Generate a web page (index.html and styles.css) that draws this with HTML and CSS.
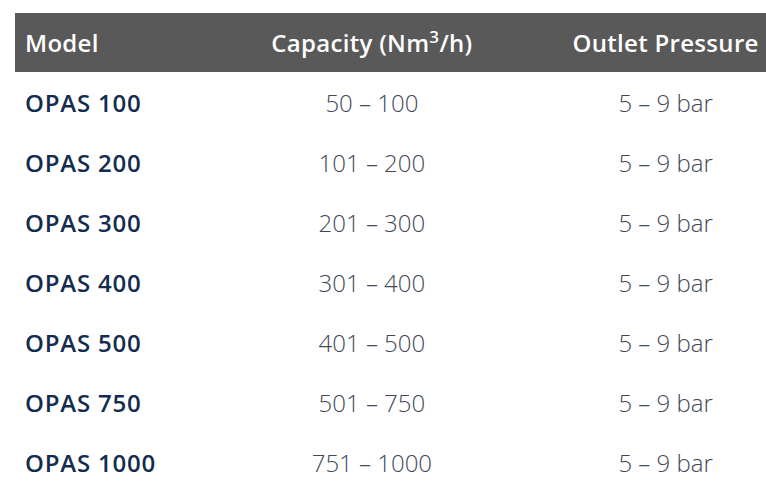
FILE: index.html
```html
<!DOCTYPE html>
<html>
<head>
<meta charset="utf-8">
<link rel="stylesheet" href="styles.css">
</head>
<body>
<table class="spec">
  <colgroup>
    <col class="c-model">
    <col class="c-cap">
    <col class="c-press">
  </colgroup>
  <thead>
    <tr>
      <th class="left">Model</th>
      <th>Capacity (Nm<sup>3</sup>/h)</th>
      <th>Outlet Pressure</th>
    </tr>
  </thead>
  <tbody>
    <tr><td class="model">OPAS 100</td><td>50 – 100</td><td>5 – 9 bar</td></tr>
    <tr><td class="model">OPAS 200</td><td>101 – 200</td><td>5 – 9 bar</td></tr>
    <tr><td class="model">OPAS 300</td><td>201 – 300</td><td>5 – 9 bar</td></tr>
    <tr><td class="model">OPAS 400</td><td>301 – 400</td><td>5 – 9 bar</td></tr>
    <tr><td class="model">OPAS 500</td><td>401 – 500</td><td>5 – 9 bar</td></tr>
    <tr><td class="model">OPAS 750</td><td>501 – 750</td><td>5 – 9 bar</td></tr>
    <tr><td class="model">OPAS 1000</td><td>751 – 1000</td><td>5 – 9 bar</td></tr>
  </tbody>
</table>
</body>
</html>
```
FILE: styles.css
```css
html, body {
  margin: 0;
  padding: 0;
  background: #ffffff;
  overflow: hidden;
}
body {
  padding: 13px 0 0 15px;
  font-family: "Open Sans", "Liberation Sans", sans-serif;
}
.spec {
  border-collapse: collapse;
  table-layout: fixed;
  width: 803px;
}
.c-model { width: 215px; }
.c-cap { width: 282px; }
.c-press { width: 304px; }
.spec th {
  background: #595959;
  color: #ffffff;
  font-weight: 600;
  font-size: 24px;
  letter-spacing: 0.3px;
  height: 59px;
  padding: 0 10px;
  text-align: center;
  white-space: nowrap;
}
.spec th.left { text-align: left; }
.spec th sup {
  font-size: 17px;
  line-height: 0;
  vertical-align: 9px;
}
.spec td {
  height: 60px;
  padding: 0 10px;
  font-size: 24px;
  font-weight: 300;
  color: #3f4959;
  text-align: center;
  white-space: nowrap;
}
.spec td.model {
  text-align: left;
  font-weight: 600;
  letter-spacing: 0.8px;
  color: #132c4f;
}
```
